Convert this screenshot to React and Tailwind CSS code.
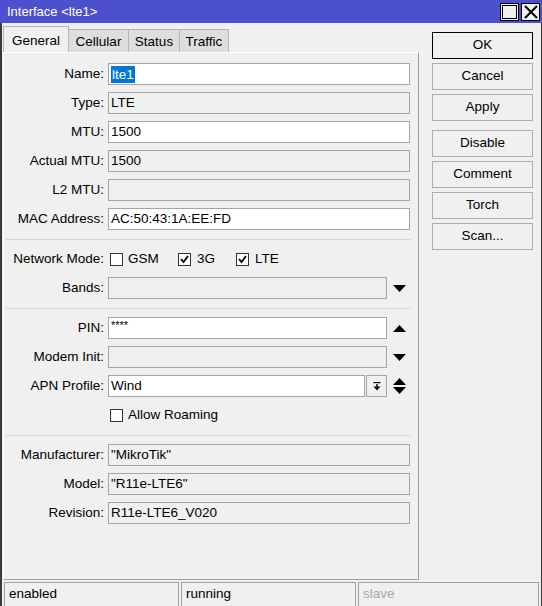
const font = "font-['Liberation_Sans',Arial,sans-serif]";

function Check({ checked }) {
  return (
    <span className="w-[13px] h-[13px] border border-[#333] bg-white flex items-center justify-center shrink-0">
      {checked && (
        <svg width="11" height="11" viewBox="0 0 11 11">
          <polyline points="2,5 4.5,8 9,2" fill="none" stroke="#000" strokeWidth="1.8" />
        </svg>
      )}
    </span>
  );
}

function Down() {
  return (
    <svg width="13" height="7" viewBox="0 0 13 7">
      <polygon points="0,0 13,0 6.5,7" fill="#000" />
    </svg>
  );
}

function Up() {
  return (
    <svg width="13" height="7" viewBox="0 0 13 7">
      <polygon points="0,7 13,7 6.5,0" fill="#000" />
    </svg>
  );
}

function Row({ label, children }) {
  return (
    <div className="flex items-center h-[22px]">
      <div className="w-[100px] text-right whitespace-nowrap">{label}</div>
      <div className="ml-[4px] flex-1 flex items-center h-full">{children}</div>
    </div>
  );
}

function Field({ value, ro, w = "w-[302px]" }) {
  return (
    <div
      className={`${w} h-[22px] border border-[#a5a5a5] flex items-center pl-[2px] whitespace-nowrap overflow-hidden ${
        ro ? "bg-[#f0f0f0]" : "bg-white"
      }`}
    >
      {value}
    </div>
  );
}

function Sep() {
  return <div className="mt-[2px] mb-[1px] h-px w-[405px] bg-[#d4d4d4] ml-[2px]" />;
}

function Btn({ children, primary }) {
  return (
    <div
      className={`w-[101px] h-[27px] flex items-center justify-center bg-[#f0f0f0] border ${
        primary ? "border-black" : "border-[#adadad]"
      }`}
    >
      {children}
    </div>
  );
}

export default function App() {
  return (
    <div className={`w-[542px] h-[606px] overflow-hidden bg-[#f0f0f0] text-[13.5px] text-black flex flex-col ${font}`}>
      {/* title bar */}
      <div className="h-[23px] bg-[#4c50cc] flex items-center justify-between pl-[7px] pr-[2px] shrink-0">
        <span className="text-white text-[13px]">Interface &lt;lte1&gt;</span>
        <div className="flex gap-[2px]">
          <div className="w-[19px] h-[18px] border border-black bg-[#f0f0f0] flex items-center justify-center">
            <span className="w-[15px] h-[14px] border border-black" />
          </div>
          <div className="w-[19px] h-[18px] border border-black bg-[#f0f0f0] flex items-center justify-center">
            <svg width="14" height="14" viewBox="0 0 14 14">
              <path d="M1 1L13 13M13 1L1 13" stroke="#000" strokeWidth="2" />
            </svg>
          </div>
        </div>
      </div>

      <div className="flex-1 flex flex-col border-l-2 border-r border-[#3a3a3a]">
        <div className="flex">
          {/* left: tabs + panel */}
          <div className="w-[416px] ml-[1px] mt-[3px]">
            <div className="h-[26px] flex items-end">
              <div className="w-[66px] h-[26px] border-l border-t border-r border-[#b5b5b5] bg-[#f0f0f0] flex items-center justify-center pt-[3px] relative z-10">
                General
              </div>
              <div className="w-[61px] h-[23px] -ml-px border border-b-0 border-[#b5b5b5] bg-[#dedede] flex items-center justify-center pt-[2px]">
                Cellular
              </div>
              <div className="w-[52px] h-[23px] -ml-px border border-b-0 border-[#b5b5b5] bg-[#dedede] flex items-center justify-center pt-[2px]">
                Status
              </div>
              <div className="w-[50px] h-[23px] -ml-px border border-b-0 border-[#b5b5b5] bg-[#dedede] flex items-center justify-center pt-[2px]">
                Traffic
              </div>
            </div>
            <div className="h-[528px] border-t border-l border-t-white border-l-white border-r border-b border-r-[#a0a0a0] border-b-[#a0a0a0] pt-[10px] flex flex-col gap-[7px]">
              <Row label="Name:">
                <Field
                  value={<span className="bg-[#0078d7] text-white px-[1px] leading-[17px]">lte1</span>}
                />
              </Row>
              <Row label="Type:">
                <Field value="LTE" ro />
              </Row>
              <Row label="MTU:">
                <Field value="1500" />
              </Row>
              <Row label="Actual MTU:">
                <Field value="1500" ro />
              </Row>
              <Row label="L2 MTU:">
                <Field value="" ro />
              </Row>
              <Row label="MAC Address:">
                <Field value="AC:50:43:1A:EE:FD" />
              </Row>
              <Sep />
              <Row label="Network Mode:">
                <div className="flex items-center ml-[2px]">
                  <div className="w-[68px] flex items-center gap-[5px]">
                    <Check />
                    <span>GSM</span>
                  </div>
                  <div className="w-[58px] flex items-center gap-[6px]">
                    <Check checked />
                    <span>3G</span>
                  </div>
                  <div className="flex items-center gap-[6px]">
                    <Check checked />
                    <span>LTE</span>
                  </div>
                </div>
              </Row>
              <Row label="Bands:">
                <Field value="" ro w="w-[279px]" />
                <div className="w-[23px] flex justify-center pl-[1px]">
                  <Down />
                </div>
              </Row>
              <Sep />
              <Row label="PIN:">
                <div className="w-[279px] h-[22px] border border-[#a5a5a5] bg-white pl-[2px] text-[11px] leading-[14px]">
                  ****
                </div>
                <div className="w-[23px] flex justify-center pl-[1px]">
                  <Up />
                </div>
              </Row>
              <Row label="Modem Init:">
                <Field value="" ro w="w-[279px]" />
                <div className="w-[23px] flex justify-center pl-[1px]">
                  <Down />
                </div>
              </Row>
              <Row label="APN Profile:">
                <Field value="Wind" w="w-[257px]" />
                <div className="ml-[1px] w-[21px] h-[22px] border border-[#a5a5a5] flex items-center justify-center">
                  <svg width="8" height="10" viewBox="0 0 8 10">
                    <rect x="0.5" y="1" width="7" height="1.2" fill="#000" />
                    <rect x="3.3" y="3" width="1.4" height="3" fill="#000" />
                    <polygon points="0.5,5.5 7.5,5.5 4,9.5" fill="#000" />
                  </svg>
                </div>
                <div className="w-[23px] flex flex-col items-center gap-[2px] pl-[1px]">
                  <Up />
                  <Down />
                </div>
              </Row>
              <Row label="">
                <div className="flex items-center gap-[5px] ml-[2px]">
                  <Check />
                  <span>Allow Roaming</span>
                </div>
              </Row>
              <Sep />
              <Row label="Manufacturer:">
                <Field value={'"MikroTik"'} ro />
              </Row>
              <Row label="Model:">
                <Field value={'"R11e-LTE6"'} ro />
              </Row>
              <Row label="Revision:">
                <Field value="R11e-LTE6_V020" ro />
              </Row>
            </div>
          </div>

          {/* right: buttons */}
          <div className="ml-[13px] mt-[9px] flex flex-col gap-[4px]">
            <Btn primary>OK</Btn>
            <Btn>Cancel</Btn>
            <Btn>Apply</Btn>
            <div className="h-[1px]" />
            <Btn>Disable</Btn>
            <Btn>Comment</Btn>
            <Btn>Torch</Btn>
            <Btn>Scan...</Btn>
          </div>
        </div>

        {/* status bar */}
        <div className="mt-[2px] ml-[2px] flex gap-[2px]">
          <div className="w-[175px] h-[25px] border border-[#a0a0a0] pl-[4px] flex items-center">enabled</div>
          <div className="w-[175px] h-[25px] border border-[#a0a0a0] pl-[4px] flex items-center">running</div>
          <div className="w-[181px] h-[25px] border border-[#a0a0a0] pl-[4px] flex items-center text-[#a8a8a8]">slave</div>
        </div>
      </div>
    </div>
  );
}
